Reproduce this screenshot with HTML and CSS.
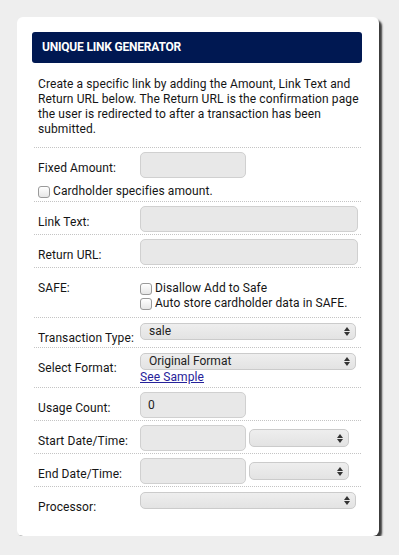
FILE: index.html
```html
<!DOCTYPE html>
<html>
<head>
    <title>Unique Link Generator</title>
    <meta name="viewport" content="width=device-width, initial-scale=1">
    <link rel="stylesheet" href="styles.css">
</head>
<body>
    <div class="card">
        <div class="card-head">UNIQUE LINK GENERATOR</div>
        <p class="intro">Create a specific link by adding the Amount, Link Text and Return URL below. The Return URL is the confirmation page the user is redirected to after a transaction has been submitted.</p>

        <div class="row">
            <label class="lbl">Fixed Amount:</label>
            <div class="field"><input type="text" class="txt short"></div>
            <label class="check wide"><input type="checkbox"> Cardholder specifies amount.</label>
        </div>

        <div class="row">
            <label class="lbl">Link Text:</label>
            <div class="field"><input type="text" class="txt long"></div>
        </div>

        <div class="row">
            <label class="lbl">Return URL:</label>
            <div class="field"><input type="text" class="txt long"></div>
        </div>

        <div class="row">
            <label class="lbl">SAFE:</label>
            <div class="field checks">
                <label class="check"><input type="checkbox"> Disallow Add to Safe</label>
                <label class="check"><input type="checkbox"> Auto store cardholder data in SAFE.</label>
            </div>
        </div>

        <div class="row tight">
            <label class="lbl">Transaction Type:</label>
            <div class="field">
                <span class="sel"><select class="long-sel"><option>sale</option></select></span>
            </div>
        </div>

        <div class="row">
            <label class="lbl">Select Format:</label>
            <div class="field">
                <span class="sel"><select class="long-sel"><option>Original Format</option></select></span>
                <a href="#" class="sample">See Sample</a>
            </div>
        </div>

        <div class="row">
            <label class="lbl">Usage Count:</label>
            <div class="field"><input type="text" class="txt short" value="0"></div>
        </div>

        <div class="row">
            <label class="lbl">Start Date/Time:</label>
            <div class="field pair">
                <input type="text" class="txt short">
                <span class="sel"><select class="time-sel"><option></option></select></span>
            </div>
        </div>

        <div class="row">
            <label class="lbl">End Date/Time:</label>
            <div class="field pair">
                <input type="text" class="txt short">
                <span class="sel"><select class="time-sel"><option></option></select></span>
            </div>
        </div>

        <div class="row">
            <label class="lbl">Processor:</label>
            <div class="field">
                <span class="sel"><select class="long-sel"><option></option></select></span>
            </div>
        </div>
    </div>
</body>
</html>
```

FILE: styles.css
```css
body { margin: 0; background-color: #eeeeee; font-family: Roboto, "Liberation Sans", sans-serif; font-size: 12px; letter-spacing: 0.1px; color: #151515; }
.card { box-sizing: border-box; width: 362px; margin: 17px 0 0 17px; padding: 15px 17px 19px 15px; background-color: #fff; border-radius: 6px; box-shadow: 3px 3px 2px rgba(0,0,0,0.75); }
.card-head { height: 31px; line-height: 31px; padding-left: 10px; background-color: #001852; color: #fff; font-weight: bold; font-size: 12px; letter-spacing: -0.2px; border-radius: 3px; }
.intro { margin: 14px 0 0; padding: 0 2px 10px 6px; line-height: 15px; }
.row { display: grid; grid-template-columns: 102px 1fr; margin: 0 1px 0 2px; padding: 4px 0 2px 4px; border-top: 1px dotted #c4c4c4; }
.row.tight { padding-bottom: 1px; }
.lbl { padding-top: 8px; line-height: 16px; white-space: nowrap; }
.field { display: flex; flex-direction: column; align-items: flex-start; }
.field.pair { flex-direction: row; align-items: center; }
.txt { box-sizing: border-box; height: 26px; margin: 0; padding: 0 7px; background-color: #e8e8e8; border: 1px solid #d0d0d0; border-radius: 5px; font: inherit; color: #222; }
.txt.short { width: 106px; }
.txt.long { width: 218px; }
.check { display: flex; align-items: center; line-height: 15px; }
.check.wide { grid-column: 1 / -1; margin-top: 6px; }
.checks { padding: 9px 0 4px; }
.check input { appearance: none; box-sizing: border-box; width: 12px; height: 12px; margin: 0 3px 0 0; border: 1px solid #9a9a9a; border-radius: 3px; background: linear-gradient(#ffffff, #e6e6e6); }
.sel { position: relative; display: inline-block; margin-top: 1px; }
.sel::before, .sel::after { content: ""; position: absolute; right: 6px; border-left: 3px solid transparent; border-right: 3px solid transparent; pointer-events: none; }
.sel::before { top: 4px; border-bottom: 4px solid #333; }
.sel::after { top: 9px; border-top: 4px solid #333; }
.sel select { appearance: none; box-sizing: border-box; display: block; height: 17px; margin: 0; padding: 0 8px; background: linear-gradient(#eeeeee, #e3e3e3); border: 1px solid #cbcbcb; border-radius: 5px; font: inherit; line-height: 15px; color: #222; }
.long-sel { width: 216px; }
.time-sel { width: 100px; }
.pair .sel { margin: 0 0 0 3px; }
.pair .sel select { height: 18px; }
.pair .sel::before { top: 5px; }
.pair .sel::after { top: 10px; }
.sample { color: #26229a; line-height: 15px; }
```
